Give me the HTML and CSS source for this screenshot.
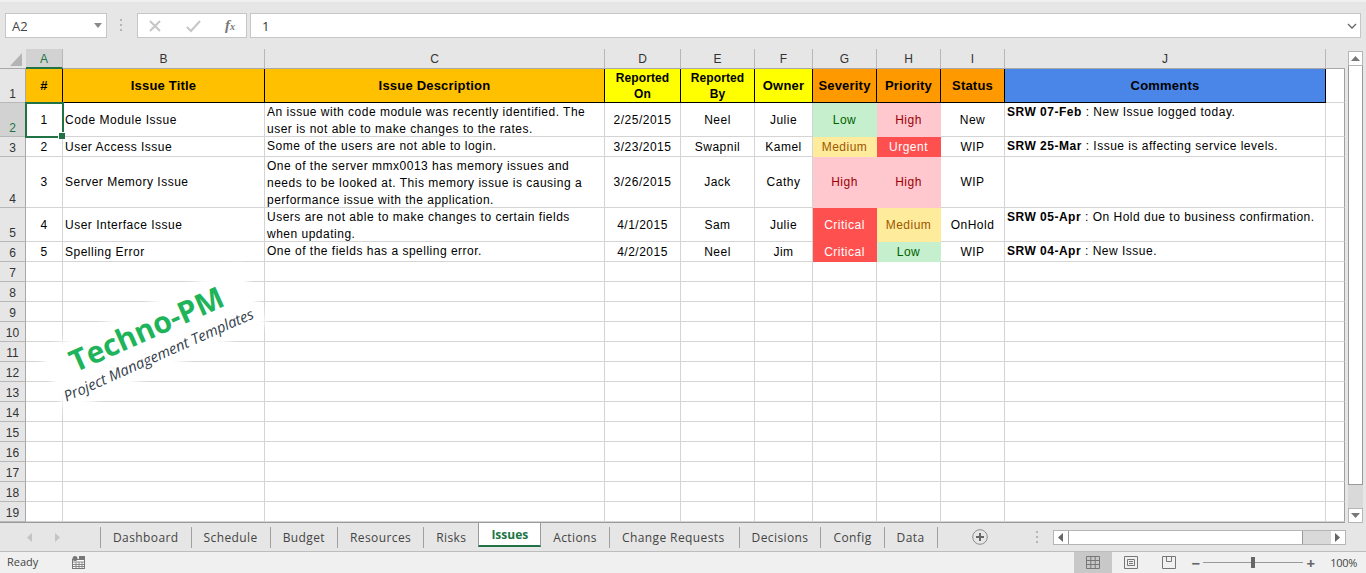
FILE: index.html
```html
<!DOCTYPE html>
<html lang="en">
<head>
  <meta charset="UTF-8">
  <title>Issues - Project Management Template</title>
  <meta name="viewport" content="width=device-width, initial-scale=1.0">
  <link rel="stylesheet" href="styles.css">
</head>
<body>
  <div class="formula-bar">
    <div class="name-box">
      <span>A2</span>
      <svg width="10" height="6" viewBox="0 0 10 6"><path d="M1 0h8L5 5z" fill="#8a8a8a"/></svg>
    </div>
    <svg class="grip" width="3" height="13" viewBox="0 0 3 13"><path d="M0 0h2v2H0zM0 5h2v2H0zM0 10h2v2H0z" fill="#b5b5b5"/></svg>
    <div class="fx-buttons">
      <svg width="14" height="14" viewBox="0 0 14 14"><path d="M2 2l10 10M12 2L2 12" stroke="#c6c6c6" stroke-width="2" fill="none"/></svg>
      <svg width="15" height="14" viewBox="0 0 15 14"><path d="M1 8l4 4 9-10" stroke="#c6c6c6" stroke-width="2" fill="none"/></svg>
      <span class="fx"><i>f</i><small>x</small></span>
    </div>
    <div class="formula-input">
      <span>1</span>
      <svg width="10" height="6" viewBox="0 0 10 6"><path d="M1 1l4 4 4-4" stroke="#666" stroke-width="1.3" fill="none"/></svg>
    </div>
  </div>

  <div class="sheet-area">
    <div class="sheet">
      <table class="grid">
        <colgroup>
          <col class="w-rh"><col class="w-a"><col class="w-b"><col class="w-c"><col class="w-d"><col class="w-e"><col class="w-f"><col class="w-g"><col class="w-h"><col class="w-i"><col class="w-j"><col class="w-k">
        </colgroup>
        <tr class="col-heads">
          <th class="corner"><svg width="13" height="13" viewBox="0 0 13 13"><path d="M12 0v13H0z" fill="#b4b4b4"/></svg></th>
          <th class="active-col">A</th><th>B</th><th>C</th><th>D</th><th>E</th><th>F</th><th>G</th><th>H</th><th>I</th><th>J</th><th class="blank-head"></th>
        </tr>
        <tr class="r34 head-row">
          <th class="row-num">1</th>
          <td class="amber">#</td>
          <td class="amber">Issue Title</td>
          <td class="amber">Issue Description</td>
          <td class="yellow small-head">Reported<br>On</td>
          <td class="yellow small-head">Reported<br>By</td>
          <td class="yellow">Owner</td>
          <td class="orange">Severity</td>
          <td class="orange">Priority</td>
          <td class="orange">Status</td>
          <td class="blue">Comments</td>
          <td></td>
        </tr>
        <tr class="r34">
          <th class="row-num active-row">2</th>
          <td class="mid selected">1</td>
          <td class="left">Code Module Issue</td>
          <td class="top"><div class="txt">An issue with code module was recently identified. The user is not able to make changes to the rates.</div></td>
          <td class="mid">2/25/2015</td><td class="mid">Neel</td><td class="mid">Julie</td>
          <td class="mid low">Low</td><td class="mid high">High</td><td class="mid">New</td>
          <td class="top"><div class="txt"><b>SRW 07-Feb</b> : New Issue logged today.</div></td><td></td>
        </tr>
        <tr class="r20">
          <th class="row-num">3</th>
          <td class="mid">2</td>
          <td class="left">User Access Issue</td>
          <td class="top"><div class="txt">Some of the users are not able to login.</div></td>
          <td class="mid">3/23/2015</td><td class="mid">Swapnil</td><td class="mid">Kamel</td>
          <td class="mid medium">Medium</td><td class="mid critical">Urgent</td><td class="mid">WIP</td>
          <td class="top"><div class="txt"><b>SRW 25-Mar</b> : Issue is affecting service levels.</div></td><td></td>
        </tr>
        <tr class="r51">
          <th class="row-num">4</th>
          <td class="mid">3</td>
          <td class="left">Server Memory Issue</td>
          <td class="top"><div class="txt">One of the server mmx0013 has memory issues and needs to be looked at. This memory issue is causing a performance issue with the application.</div></td>
          <td class="mid">3/26/2015</td><td class="mid">Jack</td><td class="mid">Cathy</td>
          <td class="mid high">High</td><td class="mid high">High</td><td class="mid">WIP</td>
          <td class="top"></td><td></td>
        </tr>
        <tr class="r34">
          <th class="row-num">5</th>
          <td class="mid">4</td>
          <td class="left">User Interface Issue</td>
          <td class="top"><div class="txt">Users are not able to make changes to certain fields when updating.</div></td>
          <td class="mid">4/1/2015</td><td class="mid">Sam</td><td class="mid">Julie</td>
          <td class="mid critical">Critical</td><td class="mid medium">Medium</td><td class="mid">OnHold</td>
          <td class="top"><div class="txt"><b>SRW 05-Apr</b> : On Hold due to business confirmation.</div></td><td></td>
        </tr>
        <tr class="r20">
          <th class="row-num">6</th>
          <td class="mid">5</td>
          <td class="left">Spelling Error</td>
          <td class="top"><div class="txt">One of the fields has a spelling error.</div></td>
          <td class="mid">4/2/2015</td><td class="mid">Neel</td><td class="mid">Jim</td>
          <td class="mid critical">Critical</td><td class="mid low">Low</td><td class="mid">WIP</td>
          <td class="top"><div class="txt"><b>SRW 04-Apr</b> : New Issue.</div></td><td></td>
        </tr>
        <tr class="r20"><th class="row-num">7</th><td></td><td></td><td></td><td></td><td></td><td></td><td></td><td></td><td></td><td></td><td></td></tr>
        <tr class="r20"><th class="row-num">8</th><td></td><td></td><td></td><td></td><td></td><td></td><td></td><td></td><td></td><td></td><td></td></tr>
        <tr class="r20"><th class="row-num">9</th><td></td><td></td><td></td><td></td><td></td><td></td><td></td><td></td><td></td><td></td><td></td></tr>
        <tr class="r20"><th class="row-num">10</th><td></td><td></td><td></td><td></td><td></td><td></td><td></td><td></td><td></td><td></td><td></td></tr>
        <tr class="r20"><th class="row-num">11</th><td></td><td></td><td></td><td></td><td></td><td></td><td></td><td></td><td></td><td></td><td></td></tr>
        <tr class="r20"><th class="row-num">12</th><td></td><td></td><td></td><td></td><td></td><td></td><td></td><td></td><td></td><td></td><td></td></tr>
        <tr class="r20"><th class="row-num">13</th><td></td><td></td><td></td><td></td><td></td><td></td><td></td><td></td><td></td><td></td><td></td></tr>
        <tr class="r20"><th class="row-num">14</th><td></td><td></td><td></td><td></td><td></td><td></td><td></td><td></td><td></td><td></td><td></td></tr>
        <tr class="r20"><th class="row-num">15</th><td></td><td></td><td></td><td></td><td></td><td></td><td></td><td></td><td></td><td></td><td></td></tr>
        <tr class="r20"><th class="row-num">16</th><td></td><td></td><td></td><td></td><td></td><td></td><td></td><td></td><td></td><td></td><td></td></tr>
        <tr class="r20"><th class="row-num">17</th><td></td><td></td><td></td><td></td><td></td><td></td><td></td><td></td><td></td><td></td><td></td></tr>
        <tr class="r20"><th class="row-num">18</th><td></td><td></td><td></td><td></td><td></td><td></td><td></td><td></td><td></td><td></td><td></td></tr>
        <tr class="r20"><th class="row-num">19</th><td></td><td></td><td></td><td></td><td></td><td></td><td></td><td></td><td></td><td></td><td></td></tr>
      </table>
      <div class="watermark">
        <div class="wm-title">Techno-PM</div>
        <div class="wm-sub">Project Management Templates</div>
      </div>
    </div>
    <div class="vscroll">
      <div class="scroll-btn"><svg width="9" height="5" viewBox="0 0 9 5"><path d="M4.5 0L9 5H0z" fill="#777"/></svg></div>
      <div class="vthumb"></div>
      <div class="vtrack"></div>
      <div class="scroll-btn"><svg width="9" height="5" viewBox="0 0 9 5"><path d="M0 0h9L4.5 5z" fill="#777"/></svg></div>
    </div>
  </div>

  <div class="tab-bar">
    <div class="tab-nav">
      <svg width="6" height="9" viewBox="0 0 6 9"><path d="M5 0v9L0 4.500z" fill="#c4c4c4"/></svg>
      <svg width="6" height="9" viewBox="0 0 6 9"><path d="M0 0v9l5-4.500z" fill="#c4c4c4"/></svg>
    </div>
    <div class="tabs">
      <span class="tab">Dashboard</span>
      <span class="tab">Schedule</span>
      <span class="tab">Budget</span>
      <span class="tab">Resources</span>
      <span class="tab">Risks</span>
      <span class="tab-active">Issues</span>
      <span class="tab">Actions</span>
      <span class="tab tab-wide">Change Requests</span>
      <span class="tab">Decisions</span>
      <span class="tab">Config</span>
      <span class="tab">Data</span>
    </div>
    <svg class="add-sheet" width="16" height="16" viewBox="0 0 16 16"><circle cx="8" cy="8" r="7.300" fill="none" stroke="#8c8c8c"/><path d="M8 4v8M4 8h8" stroke="#666" stroke-width="2"/></svg>
    <svg class="grip grip-tabs" width="3" height="13" viewBox="0 0 3 13"><path d="M0 0h2v2H0zM0 5h2v2H0zM0 10h2v2H0z" fill="#b5b5b5"/></svg>
    <div class="hscroll">
      <div class="hbtn"><svg width="5" height="9" viewBox="0 0 5 9"><path d="M5 0v9L0 4.500z" fill="#666"/></svg></div>
      <div class="hthumb"></div>
      <div class="htrack"></div>
      <div class="hbtn"><svg width="5" height="9" viewBox="0 0 5 9"><path d="M0 0v9l5-4.500z" fill="#666"/></svg></div>
    </div>
  </div>

  <div class="status-bar">
    <span class="ready">Ready</span>
    <svg class="macro" width="13" height="13" viewBox="0 0 13 13">
      <rect x="0.500" y="3.500" width="12" height="9" fill="#fff" stroke="#777"/>
      <path d="M1 6h11M1 8.500h11M1 10.500h11M4 6v6M7 6v6M10 6v6" stroke="#888" stroke-width="1"/>
      <circle cx="3" cy="2.500" r="2.500" fill="#777"/>
      <rect x="7" y="0" width="6" height="3" fill="#777"/>
    </svg>
    <div class="status-right">
      <div class="view view-on">
        <svg width="14" height="13" viewBox="0 0 14 13"><path d="M.5.500h13v12H.5zM.5 4.500h13M.5 8.500h13M4.800.500v12M9.200.500v12" fill="none" stroke="#777"/></svg>
      </div>
      <div class="view">
        <svg width="14" height="13" viewBox="0 0 14 13"><path d="M.5.500h13v12H.5z" fill="none" stroke="#777"/><path d="M3.500 3.500h7v6h-7zM5 5.500h4M5 7.500h4" fill="none" stroke="#777"/></svg>
      </div>
      <div class="view">
        <svg width="14" height="13" viewBox="0 0 14 13"><path d="M.5.500h13v12H.5zM4.500.500v5h5v-5" fill="none" stroke="#777"/></svg>
      </div>
      <div class="zoom">
        <span class="zoom-sign">&minus;</span>
        <div class="zoom-track"><span class="zoom-knob"></span></div>
        <span class="zoom-sign">+</span>
      </div>
      <span class="zoom-pct">100%</span>
    </div>
  </div>
</body>
</html>
```

FILE: styles.css
```css
* { box-sizing: border-box; }

html, body {
  margin: 0;
  height: 100%;
  overflow: hidden;
}

body {
  width: 1366px;
  height: 573px;
  display: flex;
  flex-direction: column;
  background: #e6e6e6;
  font-family: "Liberation Sans", Arial, sans-serif;
  color: #000;
}

/* formula bar */
.formula-bar {
  height: 49px;
  padding: 11px 5px 11px 5px;
  display: flex;
  align-items: stretch;
  border-top: 2px solid #f0f0f0;
}

.name-box {
  width: 102px;
  background: #fff;
  border: 1px solid #c6c6c6;
  display: flex;
  align-items: center;
  justify-content: space-between;
  padding: 0 3px 0 6px;
  font-family: "Open Sans", sans-serif;
  font-size: 13px;
  color: #444;
}

.grip { align-self: center; margin: 0 14px 0 13px; }

.fx-buttons {
  width: 110px;
  background: #fff;
  border: 1px solid #c6c6c6;
  display: flex;
  align-items: center;
  justify-content: space-between;
  padding: 0 11px 0 10px;
}

.fx {
  font-family: "Liberation Serif", serif;
  font-weight: bold;
  font-size: 15px;
  color: #777;
}
.fx small { font-size: 10px; font-style: italic; }

.formula-input {
  margin-left: 3px;
  flex: 1;
  background: #fff;
  border: 1px solid #c6c6c6;
  display: flex;
  align-items: center;
  justify-content: space-between;
  padding: 0 3px 0 11px;
  font-family: "Open Sans", sans-serif;
  font-size: 13px;
  color: #333;
}

/* sheet */
.sheet-area {
  height: 474px;
  display: flex;
  overflow: hidden;
}

.sheet {
  position: relative;
  width: 1345px;
  height: 474px;
  overflow: hidden;
  border-bottom: 1px solid #9a9a9a;
}

.grid {
  table-layout: fixed;
  width: 1345px;
  border-collapse: separate;
  border-spacing: 0;
  font-size: 12px;
  letter-spacing: 0.5px;
  background: #fff;
}

.w-rh { width: 26px; }
.w-a { width: 37px; }
.w-b { width: 202px; }
.w-c { width: 340px; }
.w-d { width: 76px; }
.w-e { width: 74px; }
.w-f { width: 58px; }
.w-g { width: 64px; }
.w-h { width: 64px; }
.w-i { width: 64px; }
.w-j { width: 321px; }
.w-k { width: 19px; }

.col-heads th {
  height: 20px;
  padding: 1px 0 0;
  font-weight: normal;
  font-size: 12px;
  color: #333;
  letter-spacing: 0;
  background: #e6e6e6;
  border-right: 1px solid #b8b8b8;
  border-bottom: 1px solid #a8a8a8;
  vertical-align: middle;
}
.col-heads .corner {
  border-right: 0;
  text-align: right;
  padding: 2px 3px 0 0;
  line-height: 0;
}
.col-heads .active-col {
  background: #d2d2d2;
  color: #217346;
  border-bottom: 2px solid #217346;
}
.col-heads .blank-head {
  background: #e6e6e6;
  border-right: 0;
  border-bottom: 1px solid #a8a8a8;
}

.row-num {
  font-weight: normal;
  font-size: 12px;
  color: #333;
  letter-spacing: 0;
  background: #e6e6e6;
  padding: 0;
  vertical-align: bottom;
  line-height: 15px;
  border-right: 1px solid #a8a8a8;
  border-bottom: 1px solid #b8b8b8;
}
.row-num.active-row {
  background: #d2d2d2;
  color: #217346;
}

.grid td {
  padding: 0 2px;
  border-right: 1px solid #d4d4d4;
  border-bottom: 1px solid #d4d4d4;
  line-height: 17px;
  overflow: hidden;
  white-space: normal;
}
.grid td:last-child { border-right: 1px solid #a0a0a0; }

.r20 { height: 20px; }
.r34 { height: 34px; }
.r51 { height: 51px; }

.grid .mid { text-align: center; vertical-align: middle; padding-top: 1px; }
.grid .left { text-align: left; vertical-align: middle; padding-top: 1px; }
.grid .top { vertical-align: top; }
/* keeps 17px lines inside the fixed excel row heights */
.txt { padding-top: 1px; margin-bottom: -2px; }

.head-row td:not(:last-child) {
  text-align: center;
  font-weight: bold;
  font-size: 13px;
  letter-spacing: 0.2px;
  border-right: 1px solid #000;
  border-bottom: 1px solid #000;
}
.head-row .small-head { line-height: 16px; padding: 0; }
.grid .head-row .small-head { font-size: 12px; letter-spacing: 0.1px; }

.amber { background: #ffc000; }
.yellow { background: #ffff00; }
.orange { background: #ff9900; }
.blue { background: #4a86e8; }

.grid .low { background: #c6efce; color: #006100; border-color: #c6efce; }
.grid .high { background: #ffc7ce; color: #9c0006; border-color: #ffc7ce; }
.grid .medium { background: #ffeb9c; color: #9c5700; border-color: #ffeb9c; }
.grid .critical { background: #ff5050; color: #fff; border-color: #ff5050; }

.grid .selected {
  position: relative;
  overflow: visible;
  outline: 2px solid #217346;
  outline-offset: -1px;
}
.grid .selected::after {
  content: "";
  position: absolute;
  right: -3px;
  bottom: -3px;
  width: 6px;
  height: 6px;
  background: #217346;
  border: 1px solid #fff;
  border-width: 1px 0 0 1px;
}

/* logo sits over the empty rows */
.watermark {
  position: absolute;
  left: 48px;
  top: 260px;
  width: 210px;
  height: 58px;
  transform: rotate(-24deg);
  background: #fff;
  box-shadow: 0 0 6px 5px #fff;
}
.wm-title {
  font-family: "Open Sans", sans-serif;
  font-weight: bold;
  font-size: 30px;
  line-height: 36px;
  padding-left: 20px;
  color: #20b45a;
}
.wm-sub {
  font-family: "Open Sans", sans-serif;
  font-style: italic;
  font-size: 14.8px;
  line-height: 20px;
  color: #33404a;
  white-space: nowrap;
}

/* scrollbars */
.vscroll {
  width: 15px;
  margin: 2px 0 0 3px;
  display: flex;
  flex-direction: column;
  height: 472px;
}
.scroll-btn {
  height: 15px;
  background: #fff;
  border: 1px solid #b5b5b5;
  display: flex;
  align-items: center;
  justify-content: center;
}
.vthumb { height: 419px; background: #fff; border: 1px solid #9a9a9a; border-top: 0; }
.vtrack { flex: 1; background: #d9d9d9; }

/* sheet tabs */
.tab-bar {
  height: 29px;
  display: flex;
  align-items: center;
  border-bottom: 1px solid #bdbdbd;
}
.tab-nav {
  width: 100px;
  padding-left: 27px;
  display: flex;
  gap: 22px;
}
.tabs {
  display: flex;
  align-self: stretch;
}
.tab, .tab-active {
  font-family: "Open Sans", sans-serif;
  font-size: 12px;
  color: #444;
  letter-spacing: 0.4px;
  display: flex;
  align-items: center;
}
.tab {
  padding: 0 12px;
  margin: 4px 0 3px;
  border-left: 1px solid #a0a0a0;
}
.tab-wide { padding-right: 14px; }
.tab:last-child { border-right: 1px solid #a0a0a0; }
.tab-active {
  padding: 0 12px 0 12px;
  letter-spacing: 0;
  background: #fff;
  color: #217346;
  font-weight: bold;
  border-left: 1px solid #9a9a9a;
  border-right: 1px solid #9a9a9a;
  border-bottom: 2px solid #217346;
  margin-bottom: 4px;
}
.tab-active + .tab { border-left: 0; }
.add-sheet { margin-left: 34px; }
.grip-tabs { margin: 0 0 0 48px; }
.hscroll {
  margin-left: 14px;
  width: 293px;
  height: 15px;
  display: flex;
  border: 1px solid #b5b5b5;
  background: #d9d9d9;
}
.hbtn {
  width: 14px;
  background: #fff;
  display: flex;
  align-items: center;
  justify-content: center;
}
.hthumb { width: 235px; background: #fff; border: 1px solid #9a9a9a; border-width: 0 1px; }
.htrack { flex: 1; }

/* status bar */
.status-bar {
  flex: 1;
  background: #f0f0f0;
  display: flex;
  align-items: center;
  font-family: "Open Sans", sans-serif;
  font-size: 11px;
  color: #444;
}
.ready { margin: -2px 0 0 7px; width: 65px; }
.status-right {
  margin-left: auto;
  align-self: stretch;
  display: flex;
  align-items: center;
}
.view {
  width: 38px;
  align-self: stretch;
  display: flex;
  align-items: center;
  justify-content: center;
}
.view-on { background: #c8c8c8; }
.zoom {
  margin-left: 3px;
  display: flex;
  align-items: center;
  gap: 3px;
}
.zoom-sign { font-size: 15px; font-weight: bold; color: #666; width: 9px; text-align: center; }
.zoom-track {
  position: relative;
  width: 100px;
  height: 1px;
  background: #999;
}
.zoom-knob {
  position: absolute;
  left: 48px;
  top: -5px;
  width: 4px;
  height: 11px;
  background: #666;
}
.zoom-pct { margin: 0 9px 0 15px; font-size: 11px; letter-spacing: -0.3px; }
```
